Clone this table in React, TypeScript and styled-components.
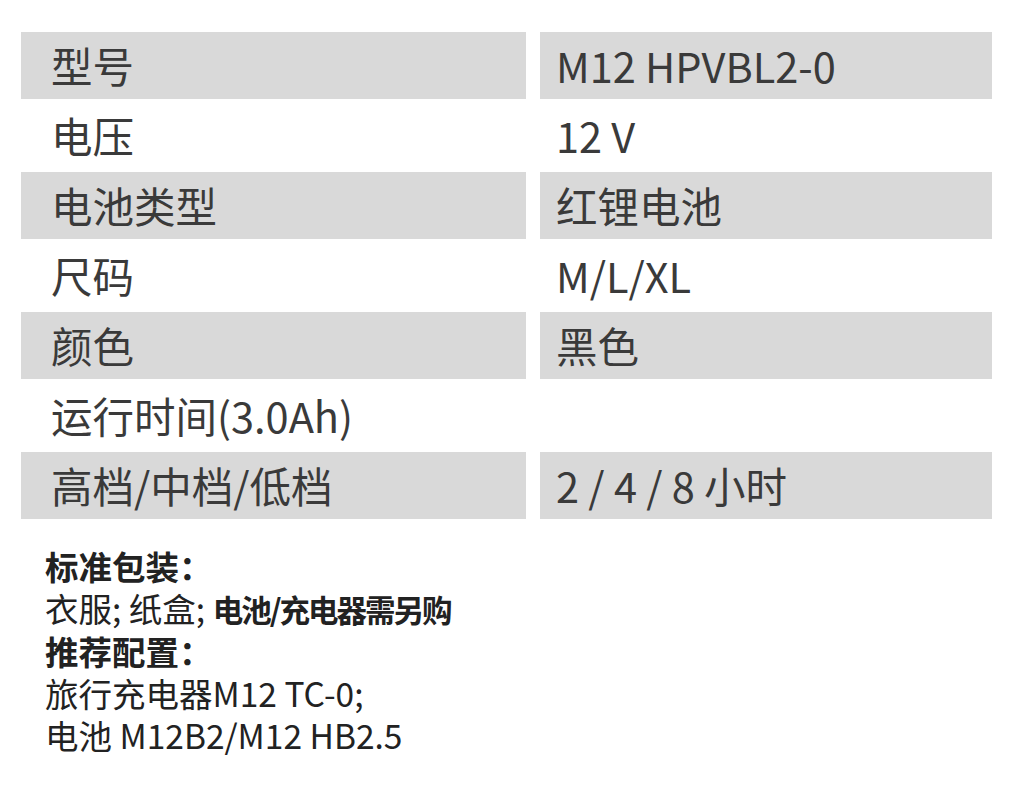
import React from "react";
import styled, { createGlobalStyle } from "styled-components";

const Global = createGlobalStyle`
  html, body { margin: 0; padding: 0; background: #ffffff; }
  body { font-family: "Noto Sans CJK SC", "Noto Sans", sans-serif; }
`;

const Page = styled.div`
  width: 1015px;
  height: 801px;
  box-sizing: border-box;
  padding: 29px 0 0 7px;
`;

const Table = styled.table`
  border-collapse: separate;
  border-spacing: 14px 3px;
  table-layout: fixed;
  width: 999px;
`;

const Row = styled.tr``;

const Cell = styled.td<{ $shade: boolean; $right?: boolean }>`
  height: 67px;
  box-sizing: border-box;
  padding: 0 0 0 ${(p) => (p.$right ? 16 : 30)}px;
  width: ${(p) => (p.$right ? 452 : 505)}px;
  background: ${(p) => (p.$shade ? "#d9d9d9" : "transparent")};
  color: #3a3a3a;
  font-size: 41.5px;
  line-height: 67px;
  white-space: nowrap;
  vertical-align: middle;
`;

const Notes = styled.div`
  padding: 0 0 0 38px;
  margin-top: 23px;
  color: #222222;
  font-size: 33.5px;
  line-height: 42px;
`;

const Line = styled.div`
  white-space: nowrap;
`;

const Strong = styled.span<{ $tight?: boolean }>`
  font-weight: 700;
  font-size: ${(p) => (p.$tight ? "30.5px" : "inherit")};
  letter-spacing: ${(p) => (p.$tight ? "-2px" : "normal")};
`;

const rows: [string, string][] = [
  ["型号", "M12 HPVBL2-0"],
  ["电压", "12 V"],
  ["电池类型", "红锂电池"],
  ["尺码", "M/L/XL"],
  ["颜色", "黑色"],
  ["运行时间(3.0Ah)", ""],
  ["高档/中档/低档", "2 / 4 / 8 小时"],
];

export default function App() {
  return (
    <Page>
      <Global />
      <Table>
        <tbody>
          {rows.map(([k, v], i) => (
            <Row key={k}>
              <Cell $shade={i % 2 === 0}>{k}</Cell>
              <Cell $shade={i % 2 === 0} $right>
                {v}
              </Cell>
            </Row>
          ))}
        </tbody>
      </Table>
      <Notes>
        <Line>
          <Strong>标准包装：</Strong>
        </Line>
        <Line>
          衣服; 纸盒; <Strong $tight>电池/充电器需另购</Strong>
        </Line>
        <Line>
          <Strong>推荐配置：</Strong>
        </Line>
        <Line>旅行充电器M12 TC-0;</Line>
        <Line>电池 M12B2/M12 HB2.5</Line>
      </Notes>
    </Page>
  );
}
